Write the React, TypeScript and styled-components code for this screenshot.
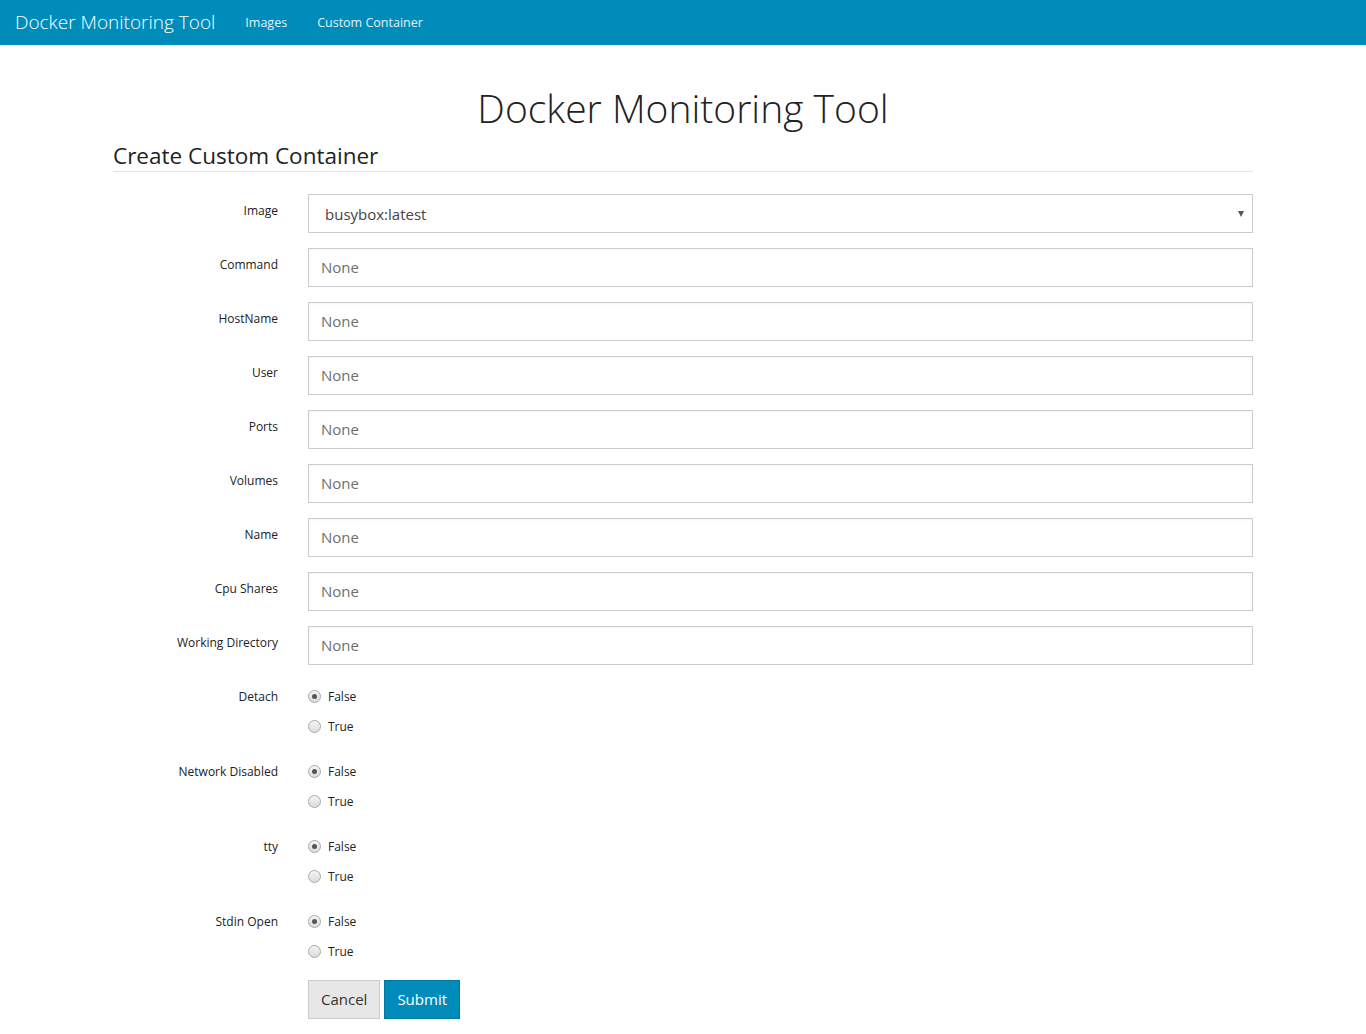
import React from "react";
import styled, { createGlobalStyle } from "styled-components";

const Global = createGlobalStyle`
  html, body { margin: 0; padding: 0; background: #fff; }
  body { font-family: "Open Sans", "Liberation Sans", sans-serif; color: #222; font-size: 15px; }
  * { box-sizing: border-box; }
`;

const NavBar = styled.nav`
  height: 45px;
  background: #008cba;
  display: flex;
  align-items: center;
  padding: 0 15px 1px;
`;

const Brand = styled.a`
  color: #fff;
  font-size: 19px;
  font-weight: 300;
  margin-right: 30px;
  text-decoration: none;
`;

const NavLink = styled.a`
  color: #e4f0f6;
  font-size: 12.5px;
  text-decoration: none;
  margin-right: 30px;
`;

const Container = styled.div`
  width: 1140px;
  margin: 0 auto;
`;

const Title = styled.h1`
  font-weight: 300;
  font-size: 39px;
  text-align: center;
  margin: 38px 0 0;
  line-height: 50px;
  color: #222;
`;

const Legend = styled.h2`
  font-size: 22.5px;
  font-weight: 400;
  margin: 8px 0 0;
  padding-bottom: 0;
  line-height: 30px;
  border-bottom: 1px solid #e5e5e5;
  color: #222;
`;

const Form = styled.form`
  margin-top: 22px;
  display: flex;
  flex-direction: column;
`;

const Row = styled.div<{ $gap?: number }>`
  display: grid;
  grid-template-columns: 165px 945px;
  column-gap: 30px;
  margin-bottom: ${(p) => p.$gap ?? 15}px;
`;

const Label = styled.label<{ $pt?: number }>`
  text-align: right;
  font-size: 12px;
  padding-top: ${(p) => p.$pt ?? 8}px;
  line-height: 18px;
  color: #222;
`;

const Input = styled.input`
  height: 39px;
  width: 100%;
  border: 1px solid #ccc;
  padding: 0 12px 1px;
  font-family: inherit;
  font-size: 15px;
  color: #333;
  box-shadow: inset 0 1px 2px rgba(0,0,0,0.05);
  outline: none;
  &::placeholder { color: #6f6f6f; opacity: 1; }
`;

const SelectBox = styled.div`
  height: 39px;
  border: 1px solid #ccc;
  display: flex;
  align-items: center;
  justify-content: space-between;
  padding: 0 8px 0 16px;
  font-size: 15px;
  color: #444;
  background: #fff;
`;

const Caret = styled.span`
  width: 0;
  height: 0;
  border-left: 3px solid transparent;
  border-right: 3px solid transparent;
  border-top: 6px solid #555;
`;

const RadioList = styled.div`
  display: flex;
  flex-direction: column;
`;

const RadioItem = styled.label`
  display: flex;
  align-items: center;
  height: 30px;
  padding-top: 2px;
  font-size: 12px;
  color: #222;
`;

const RadioDot = styled.span<{ $on?: boolean }>`
  width: 13px;
  height: 13px;
  border-radius: 50%;
  border: 1px solid #a8a8a8;
  background: linear-gradient(#f4f4f4, #dcdcdc);
  margin-right: 7px;
  display: flex;
  align-items: center;
  justify-content: center;
  &::after {
    content: "";
    width: 5px;
    height: 5px;
    border-radius: 50%;
    background: ${(p) => (p.$on ? "#555" : "transparent")};
  }
`;

const Buttons = styled.div`
  display: flex;
  gap: 4px;
`;

const Button = styled.button<{ $primary?: boolean }>`
  height: 39px;
  padding: 0 12px 2px;
  font-family: inherit;
  font-size: 15px;
  border: 1px solid ${(p) => (p.$primary ? "#0079a1" : "#ccc")};
  background: ${(p) => (p.$primary ? "#008cba" : "#e7e7e7")};
  color: ${(p) => (p.$primary ? "#fff" : "#333")};
`;

const textFields = ["Command", "HostName", "User", "Ports", "Volumes", "Name", "Cpu Shares", "Working Directory"];
const radioFields = ["Detach", "Network Disabled", "tty", "Stdin Open"];

export default function App() {
  return (
    <>
      <Global />
      <NavBar>
        <Brand>Docker Monitoring Tool</Brand>
        <NavLink>Images</NavLink>
        <NavLink>Custom Container</NavLink>
      </NavBar>
      <Container>
        <Title>Docker Monitoring Tool</Title>
        <Legend>Create Custom Container</Legend>
        <Form>
          <Row>
            <Label>Image</Label>
            <SelectBox>
              <span>busybox:latest</span>
              <Caret />
            </SelectBox>
          </Row>
          {textFields.map((f) => (
            <Row key={f}>
              <Label>{f}</Label>
              <Input placeholder="None" />
            </Row>
          ))}
          {radioFields.map((f) => (
            <Row key={f} $gap={15}>
              <Label $pt={8}>{f}</Label>
              <RadioList>
                <RadioItem><RadioDot $on />False</RadioItem>
                <RadioItem><RadioDot />True</RadioItem>
              </RadioList>
            </Row>
          ))}
          <Row>
            <span />
            <Buttons>
              <Button type="button">Cancel</Button>
              <Button type="button" $primary>Submit</Button>
            </Buttons>
          </Row>
        </Form>
      </Container>
    </>
  );
}
